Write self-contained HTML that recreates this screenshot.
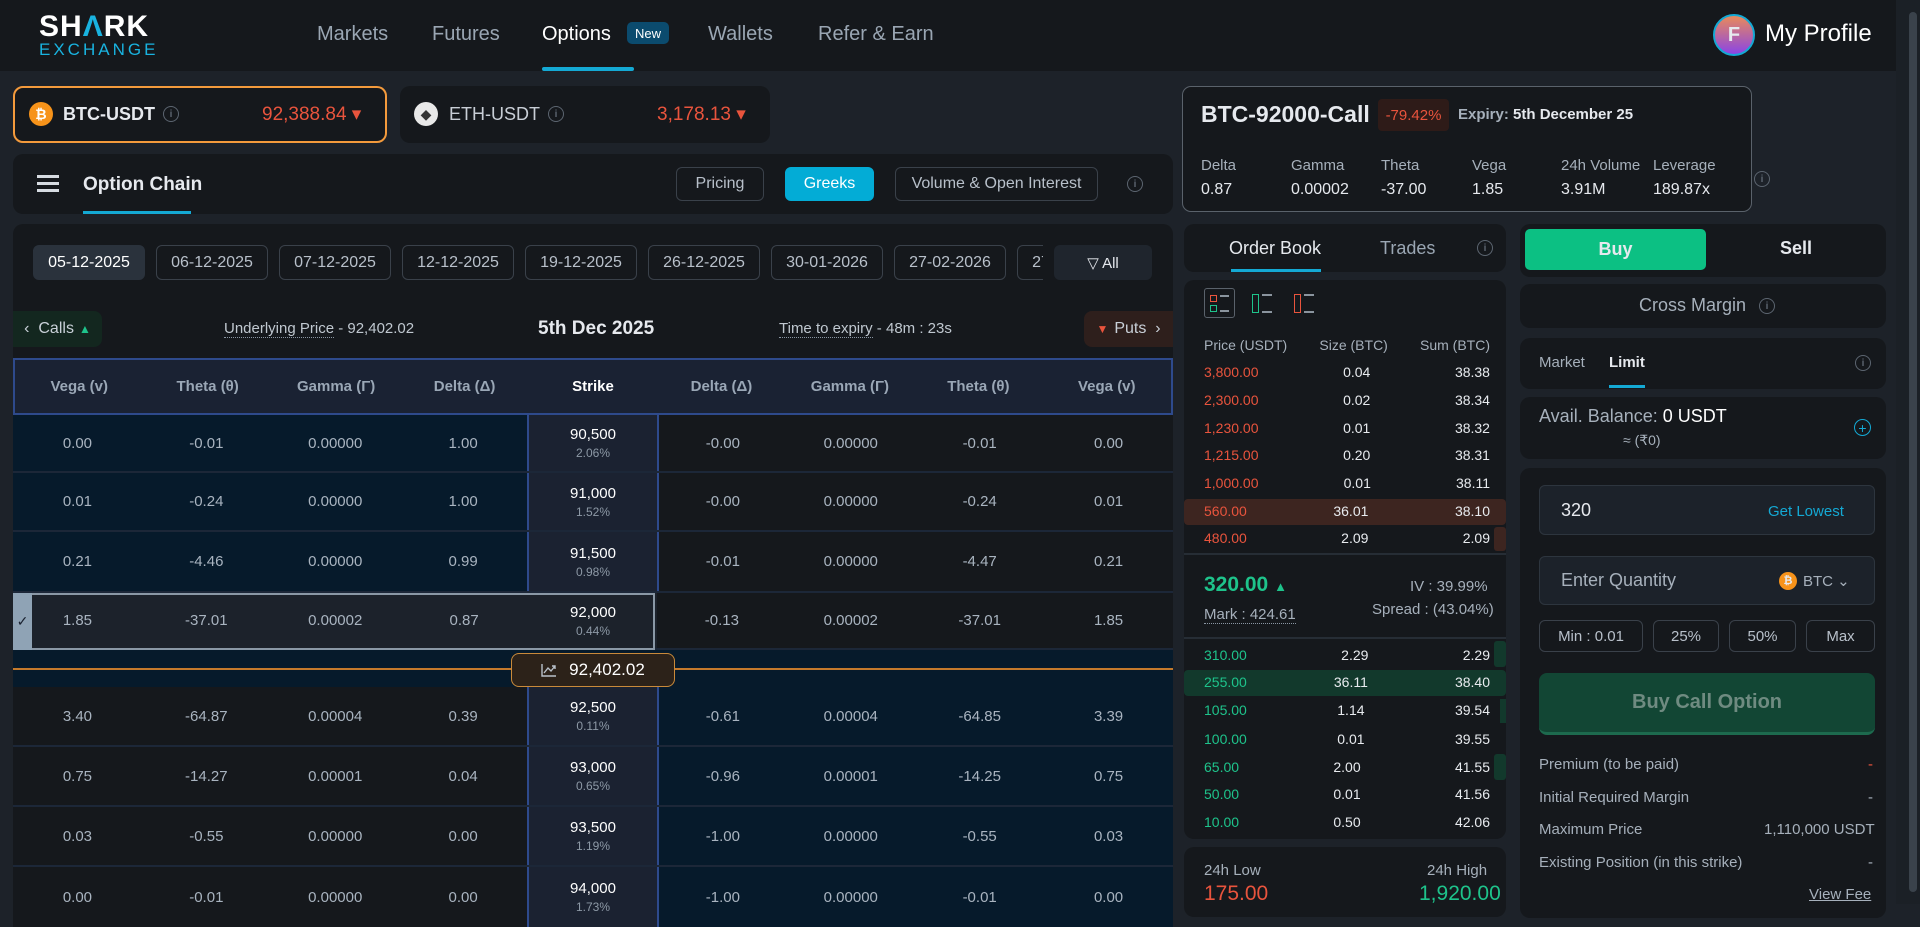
<!DOCTYPE html>
<html><head><meta charset="utf-8">
<style>
*{box-sizing:border-box;margin:0;padding:0}
body{width:1920px;height:904px;overflow:hidden;background:#1d2229;font-family:"Liberation Sans",sans-serif;color:#e6e9ee;position:relative}
.a{position:absolute}
.hdr{left:0;top:0;width:1896px;height:71px;background:#15181c}
.nav{top:23px;font-size:20px;color:#9aa6b3}
.panel{background:#15181c;border-radius:10px}
.btn{border:1px solid #3a414a;border-radius:6px;color:#b8c0ca;font-size:16px;display:flex;align-items:center;justify-content:center}
.info{width:16px;height:16px;border:1.5px solid #5c6570;border-radius:50%;color:#5c6570;font-size:10px;display:flex;align-items:center;justify-content:center;font-weight:bold}
.row{left:13px;width:1160px;display:grid;grid-template-columns:repeat(9,1fr);align-items:center;text-align:center;font-size:15px;color:#a9b4c0;border-bottom:2px solid #1c2738}
.row>div{height:100%;display:flex;align-items:center;justify-content:center;flex-direction:column}
.sk{background:#1b2231;color:#fff;font-size:15px}
.sk span{font-size:12px;color:#8d99a6;margin-top:3px}
.navy{background:#061a2b}
.dk{background:#15181c}
.ob{left:1204px;width:286px;display:flex;justify-content:space-between;font-size:14px;color:#e8ebef}
.ob span:nth-child(2){width:80px;text-align:center}
.red{color:#e9543d}.grn{color:#1ec38b}
.lbl{color:#a6b0bb}
</style></head><body>
<div class="a hdr"></div>
<div class="a" style="left:39px;top:12px;font-size:30px;font-weight:bold;letter-spacing:1px;color:#fff;line-height:30px">SH<span style="color:#19b3e0">Λ</span>RK</div>
<div class="a" style="left:39px;top:40px;font-size:17px;letter-spacing:3px;color:#19b3e0">EXCHANGE</div>
<div class="a nav" style="left:317px">Markets</div>
<div class="a nav" style="left:432px">Futures</div>
<div class="a nav" style="left:542px;color:#fff">Options</div>
<div class="a" style="left:627px;top:22px;width:42px;height:22px;background:#0b4b6e;border-radius:5px;font-size:13px;color:#fff;display:flex;align-items:center;justify-content:center">New</div>
<div class="a" style="left:542px;top:67px;width:92px;height:4px;background:#14a9d4;border-radius:2px"></div>
<div class="a nav" style="left:708px">Wallets</div>
<div class="a nav" style="left:818px">Refer &amp; Earn</div>
<div class="a" style="left:1713px;top:14px;width:42px;height:42px;border-radius:50%;border:2px solid #14a9d4;background:linear-gradient(#e98a5a,#8a45e6);display:flex;align-items:center;justify-content:center;font-size:20px;font-weight:bold">F</div>
<div class="a" style="left:1765px;top:20px;font-size:24px;color:#fff">My Profile</div>
<div class="a" style="left:1896px;top:0;width:24px;height:904px;background:#1b2026"></div>
<div class="a" style="left:1909px;top:12px;width:8px;height:880px;background:#3a424b;border-radius:4px"></div>

<!-- pair cards -->
<div class="a" style="left:13px;top:86px;width:374px;height:57px;border:2px solid #f39a3c;border-radius:10px;background:#15181c"></div>
<div class="a" style="left:29px;top:102px;width:24px;height:24px;border-radius:50%;background:#f7931a;color:#fff;font-size:14px;font-weight:bold;display:flex;align-items:center;justify-content:center">₿</div>
<div class="a" style="left:63px;top:104px;font-size:18px;font-weight:bold">BTC-USDT</div>
<div class="a info" style="left:163px;top:106px">i</div>
<div class="a red" style="left:262px;top:103px;font-size:19px">92,388.84 ▾</div>
<div class="a panel" style="left:400px;top:86px;width:370px;height:57px"></div>
<div class="a" style="left:414px;top:102px;width:24px;height:24px;border-radius:50%;background:#e8e8e8;color:#333;font-size:14px;display:flex;align-items:center;justify-content:center">◆</div>
<div class="a" style="left:449px;top:104px;font-size:18px;color:#c8ced6">ETH-USDT</div>
<div class="a info" style="left:548px;top:106px">i</div>
<div class="a red" style="left:657px;top:103px;font-size:19px">3,178.13 ▾</div>

<!-- option chain bar -->
<div class="a panel" style="left:13px;top:154px;width:1160px;height:60px"></div>
<div class="a" style="left:37px;top:175px;width:22px;height:3px;background:#d6dbe1;box-shadow:0 7px 0 #d6dbe1,0 14px 0 #d6dbe1"></div>
<div class="a" style="left:83px;top:174px;font-size:19px;font-weight:bold">Option Chain</div>
<div class="a" style="left:83px;top:211px;width:108px;height:3px;background:#14a9d4"></div>
<div class="a btn" style="left:676px;top:167px;width:88px;height:34px">Pricing</div>
<div class="a btn" style="left:785px;top:167px;width:89px;height:34px;background:#03acd6;border-color:#03acd6;color:#fff">Greeks</div>
<div class="a btn" style="left:895px;top:167px;width:203px;height:34px">Volume &amp; Open Interest</div>
<div class="a info" style="left:1127px;top:176px">i</div>

<!-- chain panel -->
<div class="a panel" style="left:13px;top:224px;width:1160px;height:690px"></div>
<div class="a" style="left:33px;top:245px;width:1010px;height:35px;overflow:hidden">
<div style="display:flex;gap:11px;font-size:15px;color:#b8c0ca">
<div class="btn" style="flex:0 0 112px;height:35px;background:#2a323c;color:#fff;border-color:#2a323c">05-12-2025</div>
<div class="btn" style="flex:0 0 112px;height:35px">06-12-2025</div>
<div class="btn" style="flex:0 0 112px;height:35px">07-12-2025</div>
<div class="btn" style="flex:0 0 112px;height:35px">12-12-2025</div>
<div class="btn" style="flex:0 0 112px;height:35px">19-12-2025</div>
<div class="btn" style="flex:0 0 112px;height:35px">26-12-2025</div>
<div class="btn" style="flex:0 0 112px;height:35px">30-01-2026</div>
<div class="btn" style="flex:0 0 112px;height:35px">27-02-2026</div>
<div class="btn" style="flex:0 0 112px;height:35px">27-03-2026</div>
</div></div>
<div class="a" style="left:1054px;top:245px;width:98px;height:35px;background:#1f252d;border-radius:6px;display:flex;align-items:center;justify-content:center;font-size:15px">▽ All</div>

<div class="a" style="left:13px;top:311px;width:89px;height:36px;background:#13271f;border-radius:0 8px 8px 0;display:flex;align-items:center;justify-content:center;font-size:16px;color:#c9d0d8">‹&nbsp; Calls <span class="grn" style="font-size:12px;margin-left:5px">▲</span></div>
<div class="a" style="left:224px;top:320px;font-size:15px;color:#c0c8d0"><span style="border-bottom:1px dotted #8a96a3">Underlying Price</span> - 92,402.02</div>
<div class="a" style="left:538px;top:318px;font-size:19px;font-weight:bold">5th Dec 2025</div>
<div class="a" style="left:779px;top:320px;font-size:15px;color:#c0c8d0"><span style="border-bottom:1px dotted #8a96a3">Time to expiry</span> - 48m : 23s</div>
<div class="a" style="left:1084px;top:311px;width:89px;height:36px;background:#2e1f1c;border-radius:8px 0 0 8px;display:flex;align-items:center;justify-content:center;font-size:16px;color:#c9d0d8"><span class="red" style="font-size:12px;margin-right:6px">▼</span>Puts &nbsp;›</div>

<div class="a row" style="top:358px;height:57px;background:#1a2233;border:2px solid #2e4a8c;font-weight:bold;color:#9aa7b6;font-size:15px">
<div>Vega (v)</div><div>Theta (θ)</div><div>Gamma (Γ)</div><div>Delta (Δ)</div><div style="color:#fff">Strike</div><div>Delta (Δ)</div><div>Gamma (Γ)</div><div>Theta (θ)</div><div>Vega (v)</div></div>

<div class="a row" style="top:415px;height:58px"><div class="navy">0.00</div><div class="navy">-0.01</div><div class="navy">0.00000</div><div class="navy" style="border-right:2px solid #2e4a8c">1.00</div><div class="sk">90,500<span>2.06%</span></div><div class="dk" style="border-left:2px solid #2e4a8c">-0.00</div><div class="dk">0.00000</div><div class="dk">-0.01</div><div class="dk">0.00</div></div>
<div class="a row" style="top:473px;height:59px"><div class="navy">0.01</div><div class="navy">-0.24</div><div class="navy">0.00000</div><div class="navy" style="border-right:2px solid #2e4a8c">1.00</div><div class="sk">91,000<span>1.52%</span></div><div class="dk" style="border-left:2px solid #2e4a8c">-0.00</div><div class="dk">0.00000</div><div class="dk">-0.24</div><div class="dk">0.01</div></div>
<div class="a row" style="top:532px;height:61px"><div class="navy">0.21</div><div class="navy">-4.46</div><div class="navy">0.00000</div><div class="navy" style="border-right:2px solid #2e4a8c">0.99</div><div class="sk">91,500<span>0.98%</span></div><div class="dk" style="border-left:2px solid #2e4a8c">-0.01</div><div class="dk">0.00000</div><div class="dk">-4.47</div><div class="dk">0.21</div></div>
<div class="a row" style="top:593px;height:57px;background:#15181c"><div style="background:#1c222b">1.85</div><div style="background:#1c222b">-37.01</div><div style="background:#1c222b">0.00002</div><div style="background:#1c222b">0.87</div><div class="sk" style="background:#1c222b">92,000<span>0.44%</span></div><div>-0.13</div><div>0.00002</div><div>-37.01</div><div>1.85</div></div>
<div class="a" style="left:13px;top:593px;width:642px;height:57px;border:2px solid #8a98a6"></div>
<div class="a" style="left:13px;top:593px;width:19px;height:57px;background:#8fa3b5;color:#1a2230;font-size:14px;display:flex;align-items:center;justify-content:center">✓</div>
<div class="a" style="left:13px;top:650px;width:1160px;height:37px;background:#061a2b"></div>
<div class="a" style="left:13px;top:668px;width:1160px;height:2px;background:#c47a2c"></div>
<div class="a" style="left:511px;top:653px;width:164px;height:34px;background:#2c2219;border:1.5px solid #c98a3a;border-radius:8px;display:flex;align-items:center;justify-content:center;font-size:17px;color:#fff"><svg width="16" height="14" viewBox="0 0 16 14" style="margin-right:12px"><path d="M1 1V13H15M3 10L7 5L10 8L14 3M11 3H14V6" fill="none" stroke="#b9c1ca" stroke-width="1.4"/></svg>92,402.02</div>

<div class="a row" style="top:687px;height:60px"><div class="dk">3.40</div><div class="dk">-64.87</div><div class="dk">0.00004</div><div class="dk" style="border-right:2px solid #2e4a8c">0.39</div><div class="sk">92,500<span>0.11%</span></div><div class="navy" style="border-left:2px solid #2e4a8c">-0.61</div><div class="navy">0.00004</div><div class="navy">-64.85</div><div class="navy">3.39</div></div>
<div class="a row" style="top:747px;height:60px"><div class="dk">0.75</div><div class="dk">-14.27</div><div class="dk">0.00001</div><div class="dk" style="border-right:2px solid #2e4a8c">0.04</div><div class="sk">93,000<span>0.65%</span></div><div class="navy" style="border-left:2px solid #2e4a8c">-0.96</div><div class="navy">0.00001</div><div class="navy">-14.25</div><div class="navy">0.75</div></div>
<div class="a row" style="top:807px;height:60px"><div class="dk">0.03</div><div class="dk">-0.55</div><div class="dk">0.00000</div><div class="dk" style="border-right:2px solid #2e4a8c">0.00</div><div class="sk">93,500<span>1.19%</span></div><div class="navy" style="border-left:2px solid #2e4a8c">-1.00</div><div class="navy">0.00000</div><div class="navy">-0.55</div><div class="navy">0.03</div></div>
<div class="a row" style="top:867px;height:60px;border:none"><div class="dk">0.00</div><div class="dk">-0.01</div><div class="dk">0.00000</div><div class="dk" style="border-right:2px solid #2e4a8c">0.00</div><div class="sk">94,000<span>1.73%</span></div><div class="navy" style="border-left:2px solid #2e4a8c">-1.00</div><div class="navy">0.00000</div><div class="navy">-0.01</div><div class="navy">0.00</div></div>

<!-- contract card -->
<div class="a" style="left:1182px;top:86px;width:570px;height:126px;border:1.5px solid #5a626b;border-radius:9px;background:#15181c"></div>
<div class="a" style="left:1201px;top:101px;font-size:23px;font-weight:bold">BTC-92000-Call</div>
<div class="a red" style="left:1378px;top:99px;width:71px;height:32px;background:#2e1b18;border-radius:4px;font-size:15px;display:flex;align-items:center;justify-content:center">-79.42%</div>
<div class="a" style="left:1458px;top:106px;font-size:15px;font-weight:bold"><span class="lbl">Expiry:</span> 5th December 25</div>
<div class="a" style="top:157px;left:1201px;font-size:15px;color:#a6b0bb">Delta</div><div class="a" style="top:181px;left:1201px;font-size:16px">0.87</div>
<div class="a" style="top:157px;left:1291px;font-size:15px;color:#a6b0bb">Gamma</div><div class="a" style="top:181px;left:1291px;font-size:16px">0.00002</div>
<div class="a" style="top:157px;left:1381px;font-size:15px;color:#a6b0bb">Theta</div><div class="a" style="top:181px;left:1381px;font-size:16px">-37.00</div>
<div class="a" style="top:157px;left:1472px;font-size:15px;color:#a6b0bb">Vega</div><div class="a" style="top:181px;left:1472px;font-size:16px">1.85</div>
<div class="a" style="top:157px;left:1561px;font-size:15px;color:#a6b0bb">24h Volume</div><div class="a" style="top:181px;left:1561px;font-size:16px">3.91M</div>
<div class="a" style="top:157px;left:1653px;font-size:15px;color:#a6b0bb">Leverage</div><div class="a" style="top:181px;left:1653px;font-size:16px">189.87x</div>
<div class="a info" style="left:1754px;top:171px">i</div>

<!-- order book -->
<div class="a panel" style="left:1184px;top:224px;width:322px;height:48px"></div>
<div class="a" style="left:1229px;top:238px;font-size:18px">Order Book</div>
<div class="a" style="left:1231px;top:269px;width:90px;height:3px;background:#14a9d4"></div>
<div class="a" style="left:1380px;top:238px;font-size:18px;color:#9aa6b3">Trades</div>
<div class="a info" style="left:1477px;top:240px">i</div>
<div class="a panel" style="left:1184px;top:280px;width:322px;height:559px"></div>
<div class="a" style="left:1204px;top:288px;width:31px;height:30px;border:1.5px solid #5a626b;border-radius:3px"></div>
<div class="a" style="left:1210px;top:295px;width:7px;height:7px;border:1.5px solid #e9543d"></div><div class="a" style="left:1210px;top:305px;width:7px;height:7px;border:1.5px solid #1ec38b"></div>
<div class="a" style="left:1220px;top:295px;width:9px;height:17px;border-top:2px solid #8a949e;border-bottom:2px solid #8a949e"></div>
<div class="a" style="left:1252px;top:294px;width:7px;height:19px;border:1.5px solid #1ec38b"></div><div class="a" style="left:1262px;top:294px;width:10px;height:19px;border-top:2px solid #8a949e;border-bottom:2px solid #8a949e"></div>
<div class="a" style="left:1294px;top:294px;width:7px;height:19px;border:1.5px solid #e9543d"></div><div class="a" style="left:1304px;top:294px;width:10px;height:19px;border-top:2px solid #8a949e;border-bottom:2px solid #8a949e"></div>
<div class="a ob" style="top:337px;color:#a6b0bb"><span>Price (USDT)</span><span style="width:auto">Size (BTC)</span><span>Sum (BTC)</span></div>
<div class="a ob" style="top:364px"><span class="red">3,800.00</span><span>0.04</span><span>38.38</span></div>
<div class="a ob" style="top:392px"><span class="red">2,300.00</span><span>0.02</span><span>38.34</span></div>
<div class="a ob" style="top:420px"><span class="red">1,230.00</span><span>0.01</span><span>38.32</span></div>
<div class="a ob" style="top:447px"><span class="red">1,215.00</span><span>0.20</span><span>38.31</span></div>
<div class="a ob" style="top:475px"><span class="red">1,000.00</span><span>0.01</span><span>38.11</span></div>
<div class="a" style="left:1184px;top:499px;width:322px;height:26px;background:#3d2520;border-radius:4px"></div>
<div class="a ob" style="top:503px"><span class="red">560.00</span><span>36.01</span><span>38.10</span></div>
<div class="a" style="left:1494px;top:527px;width:12px;height:24px;background:#3d2520;border-radius:3px"></div>
<div class="a ob" style="top:530px"><span class="red">480.00</span><span>2.09</span><span>2.09</span></div>
<div class="a" style="left:1184px;top:553px;width:322px;height:2px;background:#262d35"></div>
<div class="a grn" style="left:1204px;top:573px;font-size:21px;font-weight:bold">320.00 <span style="font-size:13px">▲</span></div>
<div class="a" style="left:1410px;top:578px;font-size:15px;color:#a6b0bb">IV : 39.99%</div>
<div class="a" style="left:1204px;top:606px;font-size:15px;color:#a6b0bb;border-bottom:1px dotted #8a96a3">Mark : 424.61</div>
<div class="a" style="left:1372px;top:601px;font-size:15px;color:#a6b0bb">Spread : (43.04%)</div>
<div class="a" style="left:1184px;top:637px;width:322px;height:2px;background:#262d35"></div>
<div class="a" style="left:1494px;top:641px;width:12px;height:26px;background:#12392c;border-radius:3px"></div>
<div class="a ob" style="top:647px"><span class="grn">310.00</span><span>2.29</span><span>2.29</span></div>
<div class="a" style="left:1184px;top:670px;width:322px;height:26px;background:#12392c;border-radius:4px"></div>
<div class="a ob" style="top:674px"><span class="grn">255.00</span><span>36.11</span><span>38.40</span></div>
<div class="a" style="left:1500px;top:699px;width:6px;height:24px;background:#12392c"></div>
<div class="a ob" style="top:702px"><span class="grn">105.00</span><span>1.14</span><span>39.54</span></div>
<div class="a ob" style="top:731px"><span class="grn">100.00</span><span>0.01</span><span>39.55</span></div>
<div class="a" style="left:1494px;top:754px;width:12px;height:26px;background:#12392c;border-radius:3px"></div>
<div class="a ob" style="top:759px"><span class="grn">65.00</span><span>2.00</span><span>41.55</span></div>
<div class="a ob" style="top:786px"><span class="grn">50.00</span><span>0.01</span><span>41.56</span></div>
<div class="a ob" style="top:814px"><span class="grn">10.00</span><span>0.50</span><span>42.06</span></div>
<div class="a panel" style="left:1184px;top:847px;width:322px;height:70px"></div>
<div class="a" style="left:1204px;top:862px;font-size:15px;color:#a6b0bb">24h Low</div>
<div class="a" style="left:1427px;top:862px;font-size:15px;color:#a6b0bb">24h High</div>
<div class="a red" style="left:1204px;top:882px;font-size:21px">175.00</div>
<div class="a grn" style="left:1419px;top:882px;font-size:21px">1,920.00</div>

<!-- trade panel -->
<div class="a panel" style="left:1520px;top:224px;width:366px;height:53px"></div>
<div class="a" style="left:1525px;top:229px;width:181px;height:41px;background:#0cc083;border-radius:5px;display:flex;align-items:center;justify-content:center;font-size:18px;font-weight:bold">Buy</div>
<div class="a" style="left:1780px;top:238px;font-size:18px;font-weight:bold">Sell</div>
<div class="a panel" style="left:1520px;top:284px;width:366px;height:44px"></div>
<div class="a" style="left:1639px;top:295px;font-size:18px;color:#a6b0bb">Cross Margin</div>
<div class="a info" style="left:1759px;top:298px">i</div>
<div class="a panel" style="left:1520px;top:338px;width:366px;height:51px"></div>
<div class="a" style="left:1539px;top:354px;font-size:15px;color:#a6b0bb">Market</div>
<div class="a" style="left:1609px;top:354px;font-size:15px;font-weight:bold">Limit</div>
<div class="a" style="left:1609px;top:385px;width:36px;height:3px;background:#14a9d4"></div>
<div class="a info" style="left:1855px;top:355px">i</div>
<div class="a panel" style="left:1520px;top:397px;width:366px;height:62px"></div>
<div class="a" style="left:1539px;top:406px;font-size:18px;color:#a6b0bb">Avail. Balance: <span style="color:#fff">0 USDT</span></div>
<div class="a" style="left:1623px;top:432px;font-size:14px;color:#a6b0bb">≈ (₹0)</div>
<div class="a" style="left:1854px;top:419px;width:17px;height:17px;border:1.5px solid #14a9d4;border-radius:50%;color:#14a9d4;font-size:14px;display:flex;align-items:center;justify-content:center">+</div>
<div class="a panel" style="left:1520px;top:468px;width:366px;height:450px"></div>
<div class="a" style="left:1539px;top:485px;width:336px;height:50px;background:#1c222a;border:1px solid #2d353e;border-radius:6px"></div>
<div class="a" style="left:1561px;top:500px;font-size:18px">320</div>
<div class="a" style="left:1768px;top:503px;font-size:15px;color:#14a9d4">Get Lowest</div>
<div class="a" style="left:1539px;top:556px;width:336px;height:49px;background:#1c222a;border:1px solid #2d353e;border-radius:6px"></div>
<div class="a" style="left:1561px;top:570px;font-size:18px;color:#a6b0bb">Enter Quantity</div>
<div class="a" style="left:1779px;top:572px;width:18px;height:18px;border-radius:50%;background:#f7931a;font-size:11px;font-weight:bold;display:flex;align-items:center;justify-content:center">₿</div>
<div class="a" style="left:1803px;top:572px;font-size:15px;color:#a6b0bb">BTC ⌄</div>
<div class="a btn" style="left:1539px;top:620px;width:104px;height:32px;font-size:15px">Min : 0.01</div>
<div class="a btn" style="left:1653px;top:620px;width:66px;height:32px;font-size:15px">25%</div>
<div class="a btn" style="left:1729px;top:620px;width:67px;height:32px;font-size:15px">50%</div>
<div class="a btn" style="left:1806px;top:620px;width:69px;height:32px;font-size:15px">Max</div>
<div class="a" style="left:1539px;top:673px;width:336px;height:62px;background:#124634;border-bottom:3px solid #1d6a4e;border-radius:8px;display:flex;align-items:center;justify-content:center;font-size:20px;font-weight:bold;color:#6f8b81">Buy Call Option</div>
<div class="a" style="left:1539px;top:756px;font-size:15px;color:#a6b0bb">Premium (to be paid)</div><div class="a red" style="left:1868px;top:756px;font-size:15px">-</div>
<div class="a" style="left:1539px;top:789px;font-size:15px;color:#a6b0bb">Initial Required Margin</div><div class="a" style="left:1868px;top:789px;font-size:15px;color:#a6b0bb">-</div>
<div class="a" style="left:1539px;top:821px;font-size:15px;color:#a6b0bb">Maximum Price</div><div class="a" style="left:1764px;top:821px;font-size:15px;color:#a6b0bb">1,110,000 USDT</div>
<div class="a" style="left:1539px;top:854px;font-size:15px;color:#a6b0bb">Existing Position (in this strike)</div><div class="a" style="left:1868px;top:854px;font-size:15px;color:#a6b0bb">-</div>
<div class="a" style="left:1809px;top:886px;font-size:15px;color:#a6b0bb;text-decoration:underline">View Fee</div>
</body></html>
